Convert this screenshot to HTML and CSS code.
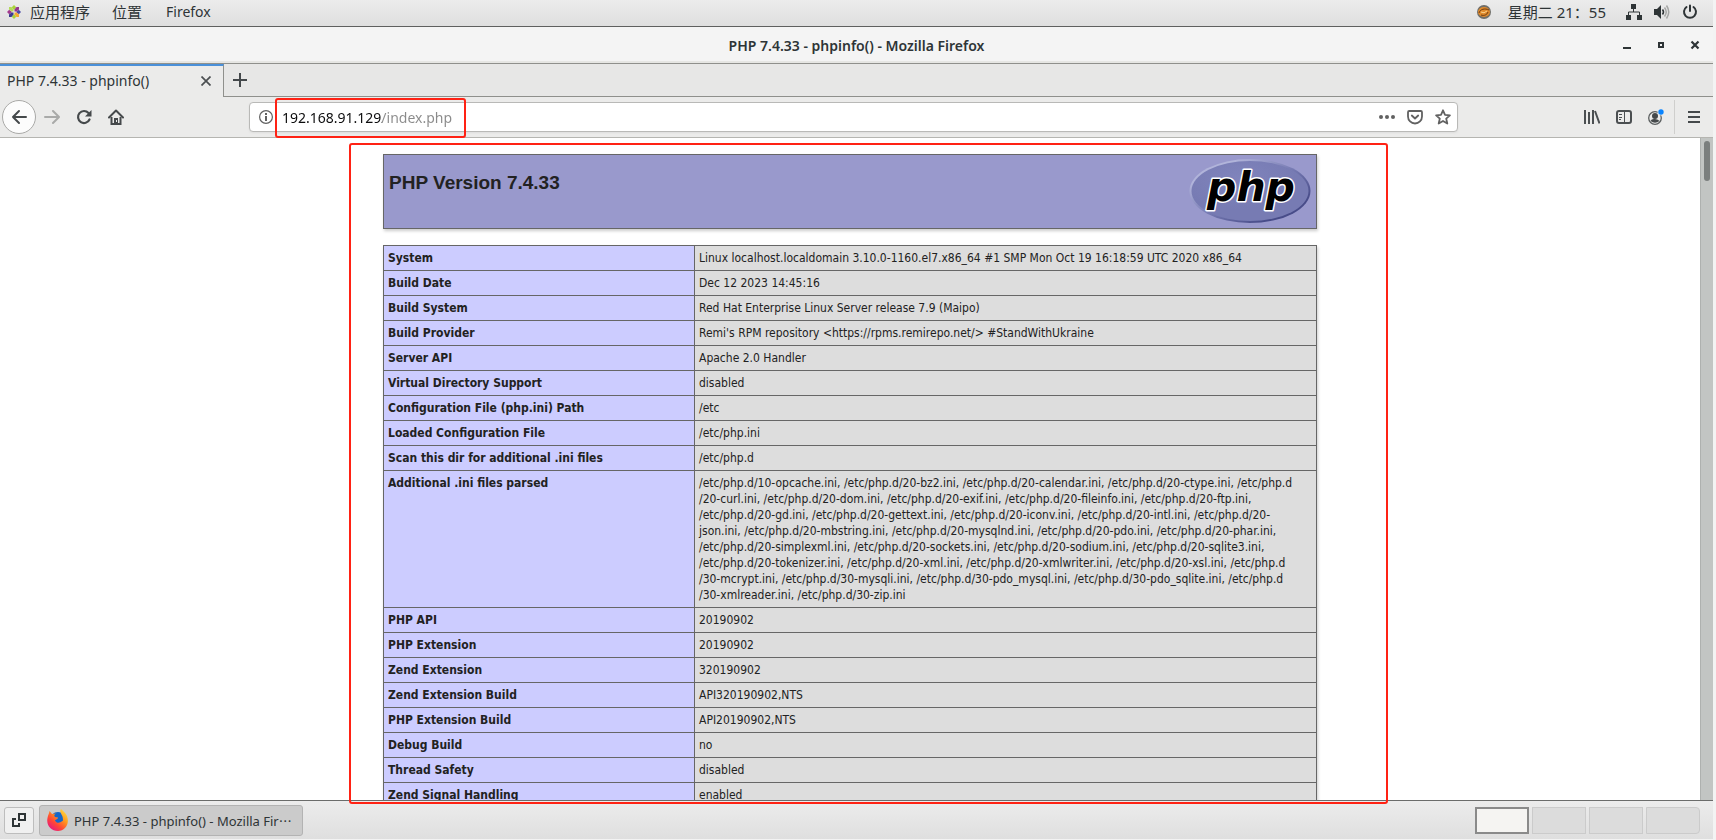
FILE: index.html
```html
<!DOCTYPE html>
<html lang="zh-CN">
<head>
<meta charset="utf-8">
<title>PHP 7.4.33 - phpinfo()</title>
<link rel="stylesheet" href="styles.css">
</head>
<body>
<div class="desktop">
  <header class="topbar">
    <nav class="topbar-menu">
      <button class="menu-item menu-apps"><svg width="14" height="14" viewBox="0 0 14 14"><path d="M7 0l2.200 2.200L7 5 4.800 2.200z" fill="#a9d33b"/><path d="M14 7l-2.200 2.200L9 7l2.800-2.200z" fill="#4b4aa5"/><path d="M7 14l-2.200-2.200L7 9l2.200 2.800z" fill="#a9d33b"/><path d="M0 7l2.200-2.200L5 7 2.200 9.200z" fill="#a23a8e"/><path d="M2 2h2.500l2 2.500v2h-2L2 4.500z" fill="#b4d95a"/><path d="M12 2H9.500l-2 2.500v2h2l2.500-2z" fill="#94378c"/><path d="M12 12H9.500l-2-2.500v-2h2l2.500 2z" fill="#f3a932"/><path d="M2 12h2.500l2-2.500v-2h-2L2 9.500z" fill="#3c3b90"/></svg>应用程序</button>
      <button class="menu-item">位置</button>
      <button class="menu-item">Firefox</button>
    </nav>
    <div class="topbar-status">
      <svg class="orb" width="16" height="16" viewBox="0 0 16 16"><circle cx="8" cy="8" r="7" fill="#6f6e69"/><ellipse cx="8" cy="8" rx="6" ry="5" fill="#e08a2c"/><path d="M3 9c1-4 6-5 10-3M5 11c3 1 6 0 7-3" fill="none" stroke="#6d3a10" stroke-width="1"/><path d="M5 8q3 2 6-1" fill="none" stroke="#fbd08a"/></svg>
      <time class="clock">星期二 21：55</time>
      <svg width="16" height="16" viewBox="0 0 16 16" fill="#2e3436"><path d="M5 0h5v5H5zM0 11h5v5H0zM11 11h5v5h-5z"/><path d="M7.500 5v3M2.500 11V8h11v3" fill="none" stroke="#2e3436"/></svg>
      <svg width="16" height="16" viewBox="0 0 16 16" fill="none"><path d="M0 5h3l4-4v14l-4-4H0z" fill="#2e3436"/><path d="M8.500 5.500q2 2.500 0 5" stroke="#2e3436" stroke-width="1.500"/><path d="M10.500 3.500q3.500 4.500 0 9M12.500 1.500q4.500 6.500 0 13" stroke="#a5a6a5" stroke-width="1.500"/></svg>
      <svg width="16" height="16" viewBox="0 0 16 16" fill="none" stroke="#2e3436" stroke-width="2" stroke-linecap="round"><path d="M4.500 3a6 6 0 1 0 7 0M8 1.500V7"/></svg>
    </div>
  </header>

  <div class="titlebar">
    <h2 class="window-title">PHP 7.4.33 - phpinfo() - Mozilla Firefox</h2>
    <div class="window-controls">
      <button aria-label="最小化"><svg width="10" height="10" viewBox="0 0 10 10"><path d="M1 7h8v2H1z" fill="#2e3436"/></svg></button>
      <button aria-label="最大化"><svg width="10" height="10" viewBox="0 0 10 10"><path d="M3 3h4v4H3z" fill="none" stroke="#2e3436" stroke-width="2"/></svg></button>
      <button aria-label="关闭"><svg width="10" height="10" viewBox="0 0 10 10"><path d="M1.500 1.500l7 7M8.500 1.500l-7 7" stroke="#2e3436" stroke-width="2.200"/></svg></button>
    </div>
  </div>

  <div class="tabstrip">
    <div class="tab">
      <span class="tab-title">PHP 7.4.33 - phpinfo()</span>
      <button aria-label="关闭标签页"><svg width="10" height="10" viewBox="0 0 10 10"><path d="M.5.5l9 9M9.500.5l-9 9" stroke="#4b4f51" stroke-width="1.700"/></svg></button>
    </div>
    <button class="new-tab" aria-label="新标签页"><svg width="14" height="14" viewBox="0 0 14 14"><path d="M7 0v14M0 7h14" stroke="#43484a" stroke-width="2"/></svg></button>
  </div>

  <div class="toolbar">
    <div class="nav-buttons">
      <button class="back" aria-label="后退"><svg width="16" height="16" viewBox="0 0 16 16"><path d="M15 8H2M8 2L2 8l6 6" fill="none" stroke="#45494b" stroke-width="2" stroke-linecap="round" stroke-linejoin="round"/></svg></button>
      <button aria-label="前进"><svg width="16" height="16" viewBox="0 0 16 16"><path d="M1 8h13M9 2l6 6-6 6" fill="none" stroke="#a9aaa9" stroke-width="2" stroke-linecap="round" stroke-linejoin="round"/></svg></button>
      <button aria-label="刷新"><svg width="16" height="16" viewBox="0 0 16 16"><path d="M13.500 10.500A6 6 0 1 1 12.500 4" fill="none" stroke="#45494b" stroke-width="2.200" stroke-linecap="round"/><path d="M15.500 1v6.500H9z" fill="#45494b"/></svg></button>
      <button aria-label="主页"><svg width="16" height="16" viewBox="0 0 16 16"><path d="M1 8.500l7-7 7 7" fill="none" stroke="#45494b" stroke-width="2" stroke-linecap="round" stroke-linejoin="round"/><path d="M3.500 8v7h9V8" fill="none" stroke="#45494b" stroke-width="2"/><path d="M6 9h4v6H6z" fill="#45494b"/><path d="M8 11h1v2H8z" fill="#eee"/></svg></button>
    </div>
    <div class="urlbar">
      <svg width="14" height="14" viewBox="0 0 14 14"><circle cx="7" cy="7" r="6.400" fill="none" stroke="#616161" stroke-width="1.200"/><path d="M6 6h2v5H6zM6 3h2v2H6z" fill="#616161"/></svg>
      <input class="url" type="text" aria-label="地址" value="192.168.91.129/index.php">
      <div class="url-actions">
        <button aria-label="页面操作"><svg width="16" height="16" viewBox="0 0 16 16" fill="#616161"><circle cx="2" cy="8" r="2"/><circle cx="8" cy="8" r="2"/><circle cx="14" cy="8" r="2"/></svg></button>
        <button aria-label="Pocket"><svg width="16" height="16" viewBox="0 0 16 16" fill="none" stroke="#616161" stroke-width="1.800" stroke-linejoin="round" stroke-linecap="round"><path d="M2.200 2h11.600q1.200 0 1.200 1.200V7.500a7 7 0 0 1-14 0V3.200Q1 2 2.200 2z"/><path d="M4.800 6.500L8 9.500l3.200-3"/></svg></button>
        <button aria-label="书签"><svg width="16" height="16" viewBox="0 0 16 16"><path d="M8 1.300l2 4.500 4.900.5-3.700 3.300 1.100 4.900L8 12l-4.300 2.500 1.100-4.900L1.100 6.300 6 5.800z" fill="none" stroke="#616161" stroke-width="1.800" stroke-linejoin="round"/></svg></button>
      </div>
      <span class="mark mark-url"></span>
    </div>
    <div class="tools">
      <button aria-label="书库"><svg width="16" height="16" viewBox="0 0 16 16" stroke="#4b4f51" stroke-width="2"><path d="M1 1v14M5 3v12M9 1v14M11 2l4.500 12.500" fill="none"/></svg></button>
      <button aria-label="侧栏"><svg width="16" height="16" viewBox="0 0 16 16" fill="none" stroke="#4b4f51"><rect x="1" y="2" width="14" height="12" rx="2" stroke-width="2"/><path d="M8.500 2v12M3 5.500h3M3 8.500h3M3 10.500h2"/></svg></button>
      <button aria-label="账户"><svg width="16" height="16" viewBox="0 0 16 16"><circle cx="7" cy="9" r="6.300" fill="none" stroke="#5b5f60" stroke-width="1.300"/><circle cx="7" cy="7" r="3" fill="#45494b"/><path d="M2.500 12q1-2.500 4.500-2t4.500 2q-4.500 3.500-9 0z" fill="#45494b"/><circle cx="13" cy="3" r="3.500" fill="#ebebea"/><circle cx="13" cy="3" r="2.700" fill="#0a84ff"/></svg></button>
      <span class="divider"></span>
      <button aria-label="菜单"><svg width="16" height="16" viewBox="0 0 16 16"><path d="M2 3h12M2 8h12M2 13h12" stroke="#45494b" stroke-width="2"/></svg></button>
    </div>
  </div>

  <div class="viewport">
    <main class="page">
      <div class="phpinfo">
        <div class="banner">
          <h1>PHP Version 7.4.33</h1>
          <svg class="logo" width="122" height="66" viewBox="0 0 122 66" role="img" aria-label="PHP logo">
            <defs>
              <linearGradient id="rim" x1="0" y1="0" x2="1" y2="1"><stop offset="0.200" stop-color="#b1b4da"/><stop offset="0.500" stop-color="#777bb3"/><stop offset="0.800" stop-color="#484c89"/></linearGradient>
              <radialGradient id="face" cx="0.400" cy="0.300"><stop offset="0" stop-color="#8084bc"/><stop offset="1" stop-color="#777bb3"/></radialGradient>
            </defs>
            <ellipse cx="61" cy="33" rx="60.500" ry="32" fill="url(#rim)"/>
            <ellipse cx="61" cy="33" rx="58.500" ry="30" fill="url(#face)"/>
            <text class="logo-word" x="62" y="43" text-anchor="middle">php</text>
          </svg>
        </div>
        <table class="info">
          <tbody>
            <tr><th scope="row">System</th><td>Linux localhost.localdomain 3.10.0-1160.el7.x86_64 #1 SMP Mon Oct 19 16:18:59 UTC 2020 x86_64</td></tr>
            <tr><th scope="row">Build Date</th><td>Dec 12 2023 14:45:16</td></tr>
            <tr><th scope="row">Build System</th><td>Red Hat Enterprise Linux Server release 7.9 (Maipo)</td></tr>
            <tr><th scope="row">Build Provider</th><td>Remi's RPM repository &lt;https://rpms.remirepo.net/&gt; #StandWithUkraine</td></tr>
            <tr><th scope="row">Server API</th><td>Apache 2.0 Handler</td></tr>
            <tr><th scope="row">Virtual Directory Support</th><td>disabled</td></tr>
            <tr><th scope="row">Configuration File (php.ini) Path</th><td>/etc</td></tr>
            <tr><th scope="row">Loaded Configuration File</th><td>/etc/php.ini</td></tr>
            <tr><th scope="row">Scan this dir for additional .ini files</th><td>/etc/php.d</td></tr>
            <tr><th scope="row">Additional .ini files parsed</th><td>/etc/php.d/10-opcache.ini, /etc/php.d/20-bz2.ini, /etc/php.d/20-calendar.ini, /etc/php.d/20-ctype.ini, /etc/php.d<br>/20-curl.ini, /etc/php.d/20-dom.ini, /etc/php.d/20-exif.ini, /etc/php.d/20-fileinfo.ini, /etc/php.d/20-ftp.ini,<br>/etc/php.d/20-gd.ini, /etc/php.d/20-gettext.ini, /etc/php.d/20-iconv.ini, /etc/php.d/20-intl.ini, /etc/php.d/20-<br>json.ini, /etc/php.d/20-mbstring.ini, /etc/php.d/20-mysqlnd.ini, /etc/php.d/20-pdo.ini, /etc/php.d/20-phar.ini,<br>/etc/php.d/20-simplexml.ini, /etc/php.d/20-sockets.ini, /etc/php.d/20-sodium.ini, /etc/php.d/20-sqlite3.ini,<br>/etc/php.d/20-tokenizer.ini, /etc/php.d/20-xml.ini, /etc/php.d/20-xmlwriter.ini, /etc/php.d/20-xsl.ini, /etc/php.d<br>/30-mcrypt.ini, /etc/php.d/30-mysqli.ini, /etc/php.d/30-pdo_mysql.ini, /etc/php.d/30-pdo_sqlite.ini, /etc/php.d<br>/30-xmlreader.ini, /etc/php.d/30-zip.ini</td></tr>
            <tr><th scope="row">PHP API</th><td>20190902</td></tr>
            <tr><th scope="row">PHP Extension</th><td>20190902</td></tr>
            <tr><th scope="row">Zend Extension</th><td>320190902</td></tr>
            <tr><th scope="row">Zend Extension Build</th><td>API320190902,NTS</td></tr>
            <tr><th scope="row">PHP Extension Build</th><td>API20190902,NTS</td></tr>
            <tr><th scope="row">Debug Build</th><td>no</td></tr>
            <tr><th scope="row">Thread Safety</th><td>disabled</td></tr>
            <tr><th scope="row">Zend Signal Handling</th><td>enabled</td></tr>
          </tbody>
        </table>
      </div>
    </main>
    <div class="scrollbar"><div class="thumb"></div></div>
    <span class="mark mark-page"></span>
  </div>

  <footer class="taskbar">
    <button class="show-desktop" aria-label="显示桌面"><svg width="14" height="14" viewBox="0 0 14 14" fill="none" stroke="#2e3436" stroke-width="2"><path d="M7 1h6v6H7z"/><path d="M4 6H1v7h6v-3"/></svg></button>
    <button class="task">
      <svg width="22" height="22" viewBox="0 0 22 22"><defs><linearGradient id="fox" x1="1" y1="0" x2="0.200" y2="1"><stop offset="0" stop-color="#fff14a"/><stop offset="0.400" stop-color="#ff9a1f"/><stop offset="0.700" stop-color="#ff4536"/><stop offset="1" stop-color="#e31587"/></linearGradient></defs><circle cx="11" cy="11" r="8" fill="#1667c9"/><path d="M14 0c2 2 5 4 6 7 3 8-2 15-9 15S-1 16 .5 9C1 6 2 5 2.500 2L5 5l4-.5c-2 1-2 2.500-1 3.500l3 .5c0 2-3 2-3 3 2 4 6 2 8 0 0-4-1-5-2-7s-1-3 0-4.500z" fill="url(#fox)"/></svg>
      <span>PHP 7.4.33 - phpinfo() - Mozilla Fir⋯</span>
    </button>
    <div class="workspaces">
      <button class="workspace current" aria-label="工作区 1"></button>
      <button class="workspace" aria-label="工作区 2"></button>
      <button class="workspace" aria-label="工作区 3"></button>
      <button class="workspace" aria-label="工作区 4"></button>
    </div>
  </footer>
</div>
</body>
</html>
```

FILE: styles.css
```css
* { box-sizing: border-box; }

body {
  margin: 0;
  background: #fff;
  color: #2e3436;
  font: 14px "Noto Sans", "Noto Sans CJK SC", sans-serif;
}

button {
  display: flex;
  align-items: center;
  margin: 0;
  padding: 0;
  border: 0;
  background: none;
  color: inherit;
  font: inherit;
}

svg { display: block; flex: none; }

.desktop {
  display: flex;
  flex-direction: column;
  height: 100vh;
  padding: 0 3px 1px 0;
  background: #f3f3f3;
}

/* Top panel */
.topbar {
  display: flex;
  flex: none;
  justify-content: space-between;
  height: 27px;
  padding: 0 15px 3px 7px;
  border-bottom: 1px solid #5f605f;
  background: linear-gradient(#ececec, #dfdfdf);
}
.topbar-menu { display: flex; gap: 22px; }
.menu-item { gap: 9px; }
.menu-apps { font-size: 15px; }
.topbar-menu .menu-item:nth-child(2) { font-size: 15px; }
.topbar-menu .menu-item:nth-child(3) { margin-left: 2px; }
.topbar-status { display: flex; align-items: center; gap: 12px; }
.orb { margin-right: 4px; }
.clock { margin-right: 8px; font-size: 15px; line-height: 20px; }

/* Window title */
.titlebar {
  display: grid;
  flex: none;
  grid-template-columns: 1fr auto 1fr;
  align-items: center;
  height: 37px;
  border-bottom: 1px solid #8f908c;
  background: #f4f4f4;
  box-shadow: inset 0 -2px #e6e6e3;
}
.window-title {
  grid-column: 2;
  margin: 0;
  font-size: 14px;
  font-weight: 600;
}
.window-controls {
  display: flex;
  justify-content: flex-end;
  gap: 24px;
  padding-right: 13px;
}

/* Tabs */
.tabstrip {
  display: flex;
  flex: none;
  height: 33px;
  background: linear-gradient(#8f908c, #8f908c) bottom / 100% 1px no-repeat #e7e7e6;
}
.tab {
  display: flex;
  align-items: center;
  justify-content: space-between;
  width: 224px;
  padding: 0 12px 2px 7px;
  border-top: 2px solid #4a90d9;
  border-right: 1px solid #8f908c;
  background: #ebebea;
}
.new-tab { padding: 0 10px 2px 9px; }

/* Navigation */
.toolbar {
  display: flex;
  flex: none;
  align-items: center;
  height: 41px;
  padding: 0 11px 0 2px;
  border-bottom: 1px solid #b5b5b1;
  background: #ebebea;
}
.nav-buttons { display: flex; align-items: center; gap: 16px; }
.back {
  justify-content: center;
  width: 34px;
  height: 34px;
  margin-right: -8px;
  border: 1px solid #a9a9a7;
  border-radius: 50%;
  background: #fcfcfc;
}
.urlbar {
  position: relative;
  display: flex;
  flex: 1;
  align-items: center;
  height: 30px;
  margin: 0 126px 0 125px;
  padding: 0 6px 0 9px;
  border: 1px solid #b9b9b7;
  border-radius: 4px;
  background: #fff;
  box-shadow: 0 1px 2px #ddd;
}
.url {
  flex: 1;
  min-width: 0;
  margin-left: 9px;
  padding: 0;
  border: 0;
  outline: 0;
  background: linear-gradient(90deg, #0c0c0d 100px, #8a8a8a 100px);
  background-clip: text;
  -webkit-background-clip: text;
  -webkit-text-fill-color: transparent;
  color: #0c0c0d;
  font: inherit;
}
.url-actions { display: flex; gap: 12px; }
.tools { display: flex; align-items: center; gap: 16px; }
.divider { width: 1px; height: 34px; margin-left: -6px; margin-right: -5px; background: #cfcfcd; }

/* Red highlight frames */
.mark {
  position: absolute;
  border: 2px solid #ff2214;
  border-radius: 3px;
  pointer-events: none;
}
.mark-url { left: 25px; top: -5px; width: 191px; height: 40px; }
.mark-page {
  left: calc(50% - 508px);
  top: 5px;
  bottom: -4px;
  width: 1039px;
}

/* Page area */
.viewport {
  position: relative;
  display: flex;
  flex: 1;
  min-height: 0;
}
.page {
  flex: 1;
  overflow: hidden;
  background: #fff;
  color: #222;
}
.scrollbar {
  width: 13px;
  padding: 3px 2px;
  border-left: 1px solid #aeb1af;
  background: #c2c5c3;
}
.thumb { width: 6px; height: 40px; margin: 0 auto; border-radius: 3px; background: #7b7f7e; }

.phpinfo { width: 934px; margin: 16px auto; }
.banner {
  display: flex;
  justify-content: space-between;
  margin-bottom: 16px;
  padding: 3px 5px 4px 5px;
  border: 1px solid #666;
  background: #99c;
  box-shadow: 1px 2px 3px #ccc;
}
.banner h1 {
  margin: 12px 0 0;
  font: 700 19px/26px "Liberation Sans", sans-serif;
}
.logo-word {
  fill: #000;
  stroke: #fff;
  stroke-width: 3px;
  stroke-linejoin: round;
  paint-order: stroke;
  font: italic 700 41px "DejaVu Sans", sans-serif;
}
.info {
  width: 100%;
  border-collapse: collapse;
  table-layout: fixed;
  box-shadow: 1px 2px 3px #ccc;
  font: 12px/16px "DejaVu Sans Condensed", "DejaVu Sans", sans-serif;
}
.info th,
.info td {
  padding: 4px;
  border: 1px solid #666;
  text-align: left;
  vertical-align: top;
}
.info th {
  width: 311px;
  background: #ccf;
  font-weight: 700;
}
.info td { background: #ddd; }

/* Bottom panel */
.taskbar {
  display: flex;
  flex: none;
  align-items: center;
  height: 39px;
  padding: 0 13px 0 4px;
  border-top: 1px solid #6b6c6b;
  background: linear-gradient(#ececec, #dfdfdf);
}
.show-desktop {
  justify-content: center;
  width: 30px;
  height: 27px;
  margin-right: 5px;
  border: 1px solid #bdbdbd;
  border-radius: 3px;
  background: #f0f0f0;
}
.task {
  gap: 5px;
  width: 264px;
  height: 31px;
  padding-left: 7px;
  border: 1px solid #b3b3b3;
  border-radius: 3px;
  background: #cbcbcb;
  font-size: 13px;
  white-space: nowrap;
}
.workspaces { display: flex; gap: 3px; margin-left: auto; }
.workspace { width: 54px; height: 27px; border: 1px solid #cbcbcb; background: #dcdcdc; }
.workspace:last-child { border-radius: 0 4px 4px 0; }
.current { border: 2px solid #8a8a8a; background: #f5f4f2; }
```
